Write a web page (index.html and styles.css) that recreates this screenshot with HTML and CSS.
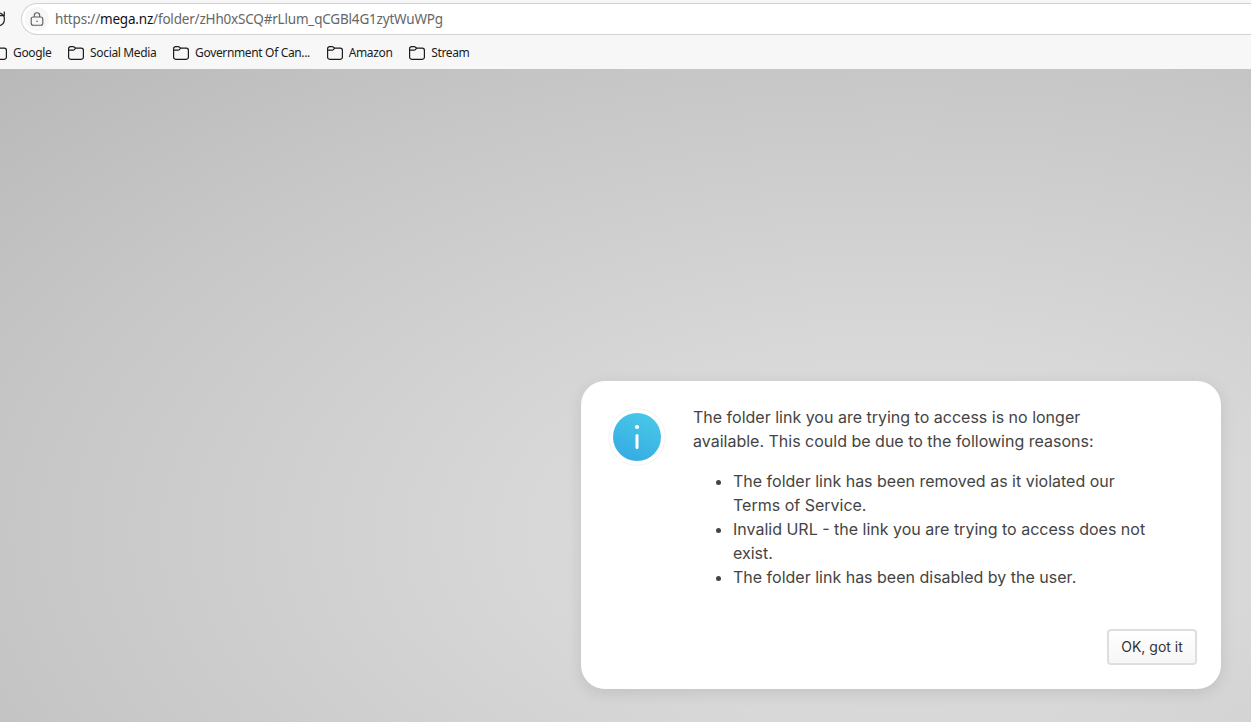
FILE: index.html
```html
<!DOCTYPE html>
<html lang="en">
<head>
    <meta charset="UTF-8">
    <meta name="viewport" content="width=device-width, initial-scale=1.0">
    <title>MEGA</title>
    <link rel="stylesheet" href="styles.css">
</head>
<body>
    <svg class="defs" width="0" height="0">
        <symbol id="folder" viewBox="0 0 16 14">
            <path d="M.6 2.700A2 2 0 0 1 2.600.7h2.600c.5 0 .9.2 1.200.5L7.600 2.100h5.700a2.100 2.100 0 0 1 2.100 2.100v7a2.100 2.100 0 0 1-2.100 2.100H2.700A2.100 2.100 0 0 1 .6 11.200zM.7 4.200h4.500c.5 0 .9-.2 1.200-.5L7.600 2.100" fill="none" stroke="#1b1b1b" stroke-width="1.200"/>
        </symbol>
    </svg>

    <div class="toolbar">
        <div class="address-row">
            <svg class="reload" width="6" height="18" viewBox="0 0 6 18">
                <path d="M0 3C2.800 4 4.400 6.300 4.400 9c0 3.200-1.800 5.700-4.400 6.600M4.300 1.500v4.200H0" fill="none" stroke="#222" stroke-width="1.200"/>
            </svg>
            <div class="address-bar">
                <span class="lock">
                    <svg width="14" height="15" viewBox="0 0 14 15" fill="none" stroke="#5c5c5c" stroke-width="1.100">
                        <rect x="1.200" y="5" width="11.600" height="8.300" rx="2"/>
                        <path d="M4.300 5V3.500a2.700 2.700 0 0 1 5.400 0V5"/>
                        <circle cx="7" cy="9.200" r=".8" fill="#5c5c5c" stroke="none"/>
                    </svg>
                </span>
                <span class="url">https://<b>mega.nz</b>/folder/zHh0xSCQ#rLlum_qCGBl4G1zytWuWPg</span>
            </div>
        </div>
        <div class="bookmarks">
            <div class="bookmark"><svg width="16" height="14"><use href="#folder"/></svg><span>Google</span></div>
            <div class="bookmark"><svg width="16" height="14"><use href="#folder"/></svg><span>Social Media</span></div>
            <div class="bookmark"><svg width="16" height="14"><use href="#folder"/></svg><span>Government Of Can...</span></div>
            <div class="bookmark"><svg width="16" height="14"><use href="#folder"/></svg><span>Amazon</span></div>
            <div class="bookmark"><svg width="16" height="14"><use href="#folder"/></svg><span>Stream</span></div>
        </div>
    </div>

    <div class="page">
        <div class="dialog">
            <div class="dialog-body">
                <div class="info-icon">
                    <svg width="58" height="58" viewBox="0 0 58 58">
                        <defs>
                            <linearGradient id="blue" x1="0.700" y1="0" x2="0.300" y2="1">
                                <stop offset="0" stop-color="#49c8e8"/>
                                <stop offset="1" stop-color="#35abe3"/>
                            </linearGradient>
                        </defs>
                        <circle cx="29" cy="29" r="28.300" fill="#fff" stroke="#f3f3f3"/>
                        <circle cx="29" cy="29" r="24" fill="url(#blue)"/>
                        <circle cx="29" cy="19" r="2.100" fill="#fff"/>
                        <rect x="27.500" y="26" width="3" height="15" rx="1.500" fill="#fff"/>
                    </svg>
                </div>
                <div class="dialog-text">
                    <p>The folder link you are trying to access is no longer available. This could be due to the following reasons:</p>
                    <ul>
                        <li>The folder link has been removed as it violated our Terms of Service.</li>
                        <li>Invalid URL - the link you are trying to access does not exist.</li>
                        <li>The folder link has been disabled by the user.</li>
                    </ul>
                </div>
            </div>
            <div class="dialog-footer">
                <button class="ok-button">OK, got it</button>
            </div>
        </div>
    </div>
</body>
</html>
```
FILE: styles.css
```css
* {
    margin: 0;
    padding: 0;
    box-sizing: border-box;
}

body {
    width: 1251px;
    height: 722px;
    overflow: hidden;
    display: flex;
    flex-direction: column;
    font-family: Inter, sans-serif;
}

.defs {
    display: none;
}

.toolbar {
    height: 69px;
    padding-top: 3px;
    background: #f7f7f7;
    font-family: "Noto Sans", "Open Sans", sans-serif;
    white-space: nowrap;
}

.address-row {
    display: flex;
    align-items: center;
    gap: 15px;
}

.reload {
    flex: none;
}

.address-bar {
    flex: 1;
    height: 32px;
    display: flex;
    align-items: center;
    padding-left: 3px;
    background: white;
    border: 1px solid #d2d2d2;
    border-right: none;
    border-radius: 16px 0 0 16px;
}

.lock {
    width: 24px;
    height: 24px;
    display: flex;
    align-items: center;
    justify-content: center;
    background: #f7f7f7;
    border-radius: 50%;
}

.url {
    margin-left: 6px;
    font-size: 13.5px;
    letter-spacing: -0.19px;
    color: #666;
}

.url b {
    font-weight: normal;
    color: #111;
}

.bookmarks {
    display: flex;
    gap: 16.700px;
    margin-left: -9px;
    padding-top: 9px;
    font-size: 12px;
    line-height: 18px;
    letter-spacing: -0.35px;
    color: #1b1b1b;
}

.bookmark {
    display: flex;
    align-items: center;
    gap: 6px;
}

.page {
    flex: 1;
    display: flex;
    align-items: flex-end;
    justify-content: flex-end;
    padding: 0 30px 33px 0;
    background: radial-gradient(1200px 640px at 901px 466px, #dedede 0, #d8d8d8 30%, #c7c7c7 73%, #b9b9b9 104%);
}

.dialog {
    width: 640px;
    height: 308px;
    display: flex;
    flex-direction: column;
    justify-content: space-between;
    padding: 24px;
    background: white;
    border-radius: 24px;
    box-shadow: 0 4px 16px rgba(0, 0, 0, 0.1);
}

.dialog-body {
    display: flex;
    gap: 27px;
    padding-left: 3px;
}

.info-icon {
    width: 58px;
    padding-top: 3px;
}

.dialog-text {
    width: 464px;
    font-size: 16px;
    line-height: 24px;
    color: #444;
}

.dialog-text p {
    width: 420px;
}

.dialog-text ul {
    margin-top: 16px;
    padding-left: 40px;
}

.dialog-footer {
    display: flex;
    justify-content: flex-end;
}

.ok-button {
    width: 90px;
    height: 36px;
    padding-bottom: 2px;
    background: linear-gradient(#fff, #f6f6f6);
    border: 2px solid #dedede;
    border-radius: 4px;
    font-family: inherit;
    font-size: 14px;
    color: #333;
}
```
